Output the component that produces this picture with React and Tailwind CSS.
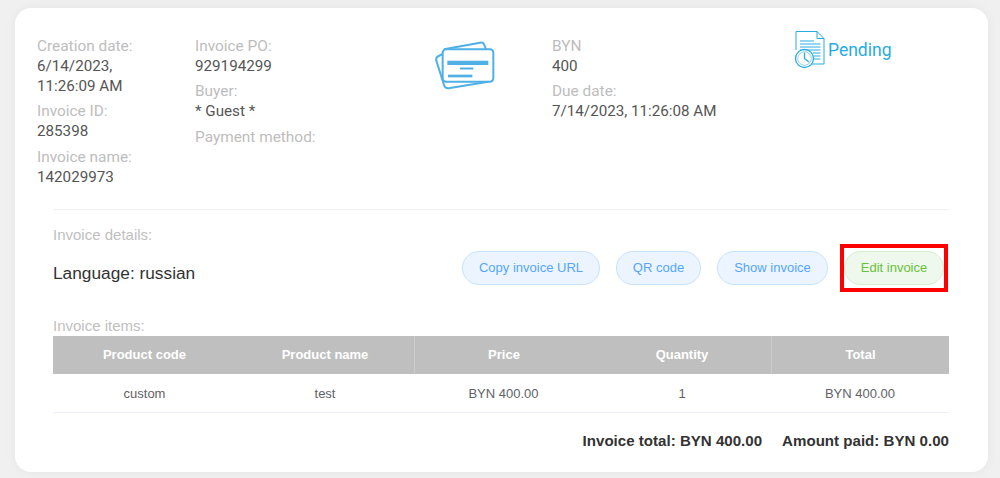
const roboto = "font-['Roboto',sans-serif]";

function Field({ label, children, last }) {
  return (
    <div className={last ? "mt-[6px]" : "mt-[5px] first:mt-0"}>
      <div className="text-[15.4px] text-[#bdbdbd]">{label}</div>
      {children && <div className="text-[15.2px] text-[#555555]">{children}</div>}
    </div>
  );
}

function CardsIcon() {
  return (
    <svg width="60" height="50" viewBox="45 60 180 150" fill="none" stroke="#4fb0e6" strokeWidth="6">
      <path d="M68 102 L56 108 Q47 112 49 122 L72 195 Q76 208 90 204 L205 185" strokeLinejoin="round" />
      <path d="M72 88 L180 68 Q190 66 193 75 L198 88" strokeLinejoin="round" />
      <rect x="68" y="88" width="152" height="97" rx="10" />
      <path d="M82 128.5 H205" strokeWidth="13" />
      <path d="M120 145.5 H160" strokeWidth="6" />
      <path d="M84 168 H157" strokeWidth="8" />
    </svg>
  );
}

function PendingIcon() {
  return (
    <svg width="31" height="39" viewBox="0 0 31 39" fill="none" stroke="#29abe2" strokeWidth="1">
      <path d="M2 20 V1.5 H23 L30 8.5 V34 H18" />
      <path d="M23 1.5 V8.5 H30" />
      <path d="M6 11 H20 M6 14 H26.5 M6 17 H26.5 M6 20 H26.5 M19 23 H26.5 M20 26 H26.5 M20 29 H26.5" />
      <circle cx="10.5" cy="28.5" r="9" fill="#fff" strokeWidth="1.3" />
      <circle cx="10.5" cy="28.5" r="6.8" strokeWidth="0.5" />
      <path d="M10.5 22.5 V28.5 L15 32" strokeWidth="1.3" />
    </svg>
  );
}

function Pill({ children, green, width }) {
  return (
    <button
      className={`h-[34px] rounded-[17px] border text-[13px] ${width} ${
        green
          ? "border-[#d4eecb] bg-[#eff8ec] text-[#67c23a]"
          : "border-[#c6e2ff] bg-[#ecf5ff] text-[#55a5ff]"
      }`}
    >
      {children}
    </button>
  );
}

export default function App() {
  const headers = ["Product code", "Product name", "Price", "Quantity", "Total"];
  const cells = ["custom", "test", "BYN 400.00", "1", "BYN 400.00"];
  const grid = "grid-cols-[183px_178px_179px_178px_178px]";
  return (
    <div className="h-[478px] w-[1000px] overflow-hidden bg-[#f0f0f0] pl-[15px] pt-[8px] font-['Liberation_Sans',sans-serif]">
      <div className="h-[464px] w-[973px] rounded-[16px] bg-white shadow-[0_0_12px_rgba(0,0,0,0.05)]">
        <div className={`flex h-[201px] pl-[22px] pt-[28px] leading-[20px] ${roboto}`}>
          <div className="w-[158px]">
            <Field label="Creation date:">6/14/2023,<br />11:26:09 AM</Field>
            <Field label="Invoice ID:">285398</Field>
            <Field last label="Invoice name:">142029973</Field>
          </div>
          <div className="w-[240px]">
            <Field label="Invoice PO:">929194299</Field>
            <Field label="Buyer:">* Guest *</Field>
            <Field last label="Payment method:" />
          </div>
          <div className="w-[117px] pt-[4px]">
            <CardsIcon />
          </div>
          <div className="w-[242px]">
            <Field label="BYN">400</Field>
            <Field label="Due date:">7/14/2023, 11:26:08 AM</Field>
          </div>
          <div className="-mt-[7px] flex h-[40px] items-center gap-[3px] text-[17.5px] text-[#29abe2]">
            <PendingIcon />
            <span className="mt-[2px]">Pending</span>
          </div>
        </div>

        <div className="ml-[38px] mr-[39px] border-t border-[#f0f0f0]">
          <div className="pt-[17px] text-[15px] leading-[16px] text-[#c0c0c0]">Invoice details:</div>
          <div className="mt-[8px] flex h-[34px] items-center">
            <div className="mt-[12px] text-[17.3px] text-[#333333]">Language: russian</div>
            <div className="ml-auto flex items-center">
              <Pill width="w-[138px]">Copy invoice URL</Pill>
              <div className="w-[16px]" />
              <Pill width="w-[85px]">QR code</Pill>
              <div className="w-[16px]" />
              <Pill width="w-[111px]">Show invoice</Pill>
              <div className="ml-[12px] mr-[1px] border-[4px] border-[#ff0000] py-[3px]">
                <Pill green width="w-[100px] block">Edit invoice</Pill>
              </div>
            </div>
          </div>
          <div className="mt-[31px] text-[15px] leading-[20px] text-[#c0c0c0]">Invoice items:</div>
          <div className={`grid h-[38px] ${grid} items-center bg-[#bfbfbf] text-center text-[13px] font-bold text-white`}>
            {headers.map((h, i) => (
              <div key={h} className={`flex h-full items-center justify-center ${i === 2 || i === 4 ? "border-l border-[#cccccc]" : ""}`}>{h}</div>
            ))}
          </div>
          <div className={`grid h-[39px] ${grid} items-center border-b border-[#ebeef5] pt-[1px] text-center text-[13px] text-[#606266]`}>
            {cells.map((c, i) => (
              <div key={i}>{c}</div>
            ))}
          </div>
          <div className="mt-[19px] flex justify-end gap-[20px] text-[15.1px] font-bold leading-[18px] text-[#333333]">
            <span>Invoice total: BYN 400.00</span>
            <span>Amount paid: BYN 0.00</span>
          </div>
        </div>
      </div>
    </div>
  );
}
